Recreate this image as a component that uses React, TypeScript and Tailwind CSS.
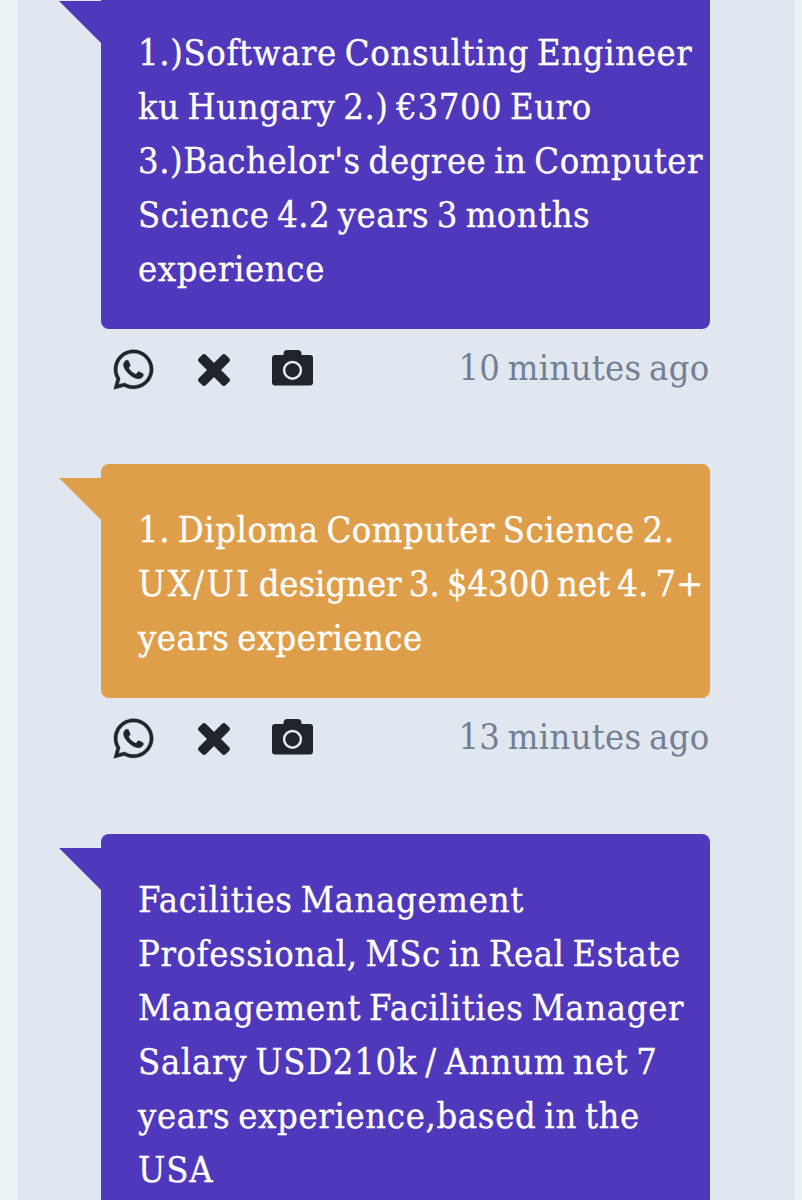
import React from 'react';
import { FaWhatsapp } from 'react-icons/fa';

interface Line {
  lead?: string;
  text: string;
  tracking: string;
}

interface Message {
  id: number;
  lines: Line[];
  time?: string;
  bubble: string;
  tail: string;
}

const messages: Message[] = [
  {
    id: 1,
    lines: [
      { text: '1.)Software Consulting Engineer', tracking: 'tracking-[0.64px]' },
      { text: 'ku Hungary 2.) €3700 Euro', tracking: 'tracking-[0.58px]' },
      { text: "3.)Bachelor's degree in Computer", tracking: 'tracking-[0.55px]' },
      { text: 'Science 4.2 years 3 months', tracking: 'tracking-[0.48px]' },
      { text: 'experience', tracking: 'tracking-[0.65px]' },
    ],
    time: '10 minutes ago',
    bubble: 'bg-[#5038bc]',
    tail: 'border-t-[#5038bc]',
  },
  {
    id: 2,
    lines: [
      { text: '1. Diploma Computer Science 2.', tracking: 'tracking-[0.55px]' },
      { lead: 'UX/UI', text: ' designer 3. $4300 net 4. 7+', tracking: 'tracking-[-0.02px]' },
      { text: 'years experience', tracking: 'tracking-[0.5px]' },
    ],
    time: '13 minutes ago',
    bubble: 'bg-[#df9f4a]',
    tail: 'border-t-[#df9f4a]',
  },
  {
    id: 3,
    lines: [
      { text: 'Facilities Management', tracking: 'tracking-[0.7px]' },
      { text: 'Professional, MSc in Real Estate', tracking: 'tracking-[0.6px]' },
      { text: 'Management Facilities Manager', tracking: 'tracking-[0.68px]' },
      { text: 'Salary USD210k / Annum net 7', tracking: 'tracking-[0.72px]' },
      { text: 'years experience,based in the', tracking: 'tracking-[0.68px]' },
      { text: 'USA', tracking: 'tracking-[0.9px]' },
    ],
    bubble: 'bg-[#5038bc]',
    tail: 'border-t-[#5038bc]',
  },
];

const CrossIcon: React.FC = () => (
  <svg width="32" height="32" viewBox="0 0 32 32" fill="currentColor">
    <rect x="-3" y="11" width="38" height="10" rx="2.8" transform="rotate(45 16 16)" />
    <rect x="-3" y="11" width="38" height="10" rx="2.8" transform="rotate(-45 16 16)" />
  </svg>
);

const CameraIcon: React.FC = () => (
  <svg width="41" height="36" viewBox="0 0 41 36" fill="currentColor">
    <path d="M3 5H11.5V4A4 4 0 0 1 15.5 0H25.5A4 4 0 0 1 29.5 4V5H38A3 3 0 0 1 41 8V32.5A3 3 0 0 1 38 35.5H3A3 3 0 0 1 0 32.5V8A3 3 0 0 1 3 5Z" />
    <circle cx="20.5" cy="20.3" r="8.4" fill="none" stroke="#e4ebf2" strokeWidth="2.5" />
  </svg>
);

const MessageCard: React.FC<{ message: Message }> = ({ message }) => (
  <div>
    <div className={`relative rounded-lg pt-[39px] pb-[33px] pl-[37px] text-white ${message.bubble}`}>
      {/* Speech tail */}
      <div className={`absolute top-[14px] -left-[42px] border-t-[42px] border-l-[42px] border-l-transparent ${message.tail}`} />
      {message.lines.map(line => (
        <p
          key={line.text}
          className={`text-[36px] leading-[54px] whitespace-nowrap [word-spacing:-3px] [-webkit-text-stroke:0.3px] ${line.tracking}`}
        >
          {line.lead && <span className="tracking-[2.4px]">{line.lead}</span>}
          {line.text}
        </p>
      ))}
    </div>

    {message.time && (
      <div className="flex h-[135.4px] items-start justify-between pt-3">
        <div className="flex items-center pl-[9.5px] pt-[6px] text-[#20252b]">
          <FaWhatsapp size={45} stroke="currentColor" strokeWidth={5} />
          <div className="ml-[42px]">
            <CrossIcon />
          </div>
          <div className="ml-[42.5px] -mt-[3px]">
            <CameraIcon />
          </div>
        </div>
        <span className="text-[36px] leading-[54px] tracking-[0.3px] whitespace-nowrap text-[#718096] [word-spacing:-3px]">{message.time}</span>
      </div>
    )}
  </div>
);

const App: React.FC = () => {
  return (
    <div className="h-[1200px] overflow-hidden bg-[#ebf2f6] pl-[18px] pr-[8px] font-['DejaVu_Serif_Condensed','DejaVu_Serif',serif] [font-stretch:condensed]">
      <div className="h-full overflow-hidden border-x border-[#d6dee8] bg-[#e0e7ef] pl-[82px] pr-[83.5px]">
        <div className="-mt-[13px]">
          {messages.map(message => (
            <MessageCard key={message.id} message={message} />
          ))}
        </div>
      </div>
    </div>
  );
};

export default App;
